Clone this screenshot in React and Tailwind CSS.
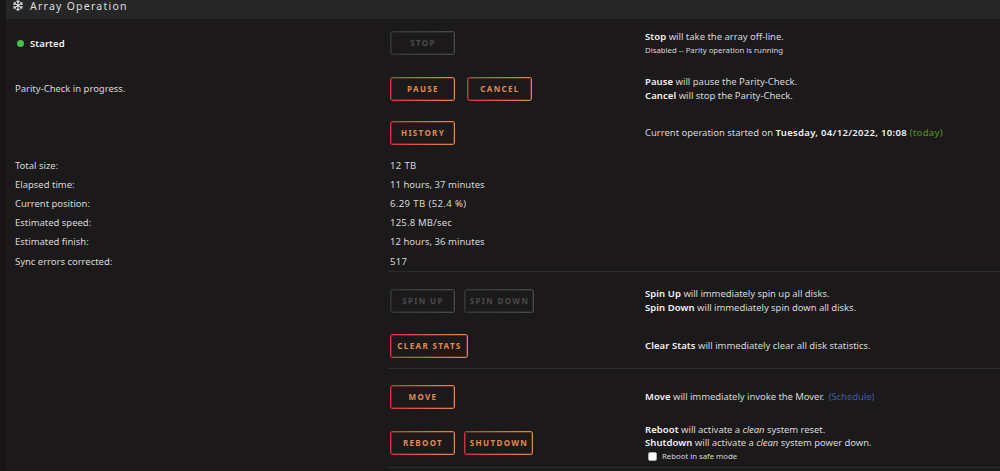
import { FaRegSnowflake } from "react-icons/fa";

function Btn({ children, width, disabled = false }) {
  const edge = disabled
    ? "bg-linear-to-r from-[#353435] to-[#4b4a4b]"
    : "bg-linear-to-r from-[#d22f3b] to-[#e58a4a]";
  const text = disabled
    ? "text-[#4a494a] shadow-[inset_0_0_0_1px_#2a292a]"
    : "text-[#e58a4e] shadow-[inset_0_0_0_1px_#562f2a]";
  return (
    <button disabled={disabled} className={`h-6 shrink-0 rounded-[3px] p-px ${width} ${edge}`}>
      <span className={`flex h-full w-full items-center justify-center rounded-[2px] bg-[#1b191a] pl-px text-[8px] font-bold tracking-[1.35px] whitespace-nowrap ${text}`}>
        {children}
      </span>
    </button>
  );
}

function Row({ height, label, actions, children }) {
  return (
    <div className={`grid grid-cols-[375px_255px_1fr] grid-rows-[100%] items-center pl-[9px] ${height}`}>
      <div>{label}</div>
      <div className="flex items-center">{actions}</div>
      <div className="whitespace-nowrap">{children}</div>
    </div>
  );
}

function B({ children }) {
  return <b className="font-semibold tracking-[0.08px] text-[#f4f4f4]">{children}</b>;
}

const Rule = () => <div className="ml-[382px] h-px bg-[#2c2b2c]" />;

const stats = [
  ["Total size:", "12 TB", "tracking-[0.35px]"],
  ["Elapsed time:", "11 hours, 37 minutes", "tracking-[0.03px]"],
  ["Current position:", "6.29 TB (52.4 %)", "tracking-[0.4px]"],
  ["Estimated speed:", "125.8 MB/sec", "tracking-[0.2px]"],
  ["Estimated finish:", "12 hours, 36 minutes", "tracking-[0.03px]"],
  ["Sync errors corrected:", "517", "tracking-[0.35px]"],
];

export default function App() {
  return (
    <main className="h-[471px] w-[1000px] overflow-hidden bg-[#171516] pl-1.5 font-['Noto_Sans',sans-serif] text-[9.5px] leading-[13.7px] tracking-[-0.02px] text-[#d8d8d8]">
      <div className="h-full bg-[#1b191a]">
        <header className="flex h-[19px] items-start gap-[7px] bg-[#262626] pl-[7px]">
          <FaRegSnowflake className="h-[11px] w-[10px] shrink-0 text-[#e4e4e4]" />
          <h1 className="text-[10.5px] leading-[12px] tracking-[1.25px] text-[#dedede]">Array Operation</h1>
        </header>

        <Row
          height="h-12"
          label={
            <div className="flex items-center gap-[6px] pt-px pl-[2px]">
              <span className="size-[7px] rounded-full bg-[#45c444]" />
              <B>Started</B>
            </div>
          }
          actions={<Btn disabled width="w-[65px]">STOP</Btn>}
        >
          <div className="pt-[2px]"><B>Stop</B> will take the array off-line.</div>
          <div className="text-[7.8px]">Disabled -- Parity operation is running</div>
        </Row>
        <Row
          height="h-[43px]"
          label="Parity-Check in progress."
          actions={<div className="flex gap-3"><Btn width="w-[65px]">PAUSE</Btn><Btn width="w-[65px]">CANCEL</Btn></div>}
        >
          <div><B>Pause</B> will pause the Parity-Check.</div>
          <div><B>Cancel</B> will stop the Parity-Check.</div>
        </Row>
        <Row height="h-[46px]" actions={<Btn width="w-[65px]">HISTORY</Btn>}>
          Current operation started on{" "}
          <b className="font-semibold tracking-[0.32px] text-[#f4f4f4]">Tuesday, 04/12/2022, 10:08</b>{" "}
          <span className="font-medium tracking-[0.25px] text-[#4f8a1f]">(today)</span>
        </Row>
        {stats.map(([name, value, tracking]) => (
          <Row key={name} height="h-[19.2px]" label={name} actions={<span className={tracking}>{value}</span>} />
        ))}
        <Rule />
        <Row
          height="h-[57px]"
          actions={<div className="flex gap-[9px]"><Btn disabled width="w-[65px]">SPIN UP</Btn><Btn disabled width="w-[70px]">SPIN DOWN</Btn></div>}
        >
          <div className="tracking-[-0.06px]"><B>Spin Up</B> will immediately spin up all disks.</div>
          <div className="tracking-[-0.06px]"><B>Spin Down</B> will immediately spin down all disks.</div>
        </Row>
        <Row height="h-[33px]" actions={<Btn width="w-[78px]">CLEAR STATS</Btn>}>
          <B>Clear Stats</B> will immediately clear all disk statistics.
        </Row>
        <div className="h-[6px]" />
        <Rule />
        <Row height="h-14" actions={<Btn width="w-[65px]">MOVE</Btn>}>
          <div className="tracking-[-0.06px]">
            <B>Move</B> will immediately invoke the Mover. <span className="ml-[2px] text-[#405b9d]">(Schedule)</span>
          </div>
        </Row>
        <Row
          height="h-9"
          actions={<div className="flex gap-[9px]"><Btn width="w-[65px]">REBOOT</Btn><Btn width="w-[69px]">SHUTDOWN</Btn></div>}
        >
          <div className="tracking-[-0.06px]"><B>Reboot</B> will activate a <i>clean</i> system reset.</div>
          <div className="tracking-[-0.06px]"><B>Shutdown</B> will activate a <i>clean</i> system power down.</div>
          <label className="flex items-center gap-[5px] pl-[3px] text-[7.8px]">
            <input type="checkbox" className="size-[9px] appearance-none rounded-[2px] border border-[#aaa] bg-white" />
            Reboot in safe mode
          </label>
        </Row>
        <div className="h-[6px]" />
        <Rule />
      </div>
    </main>
  );
}
